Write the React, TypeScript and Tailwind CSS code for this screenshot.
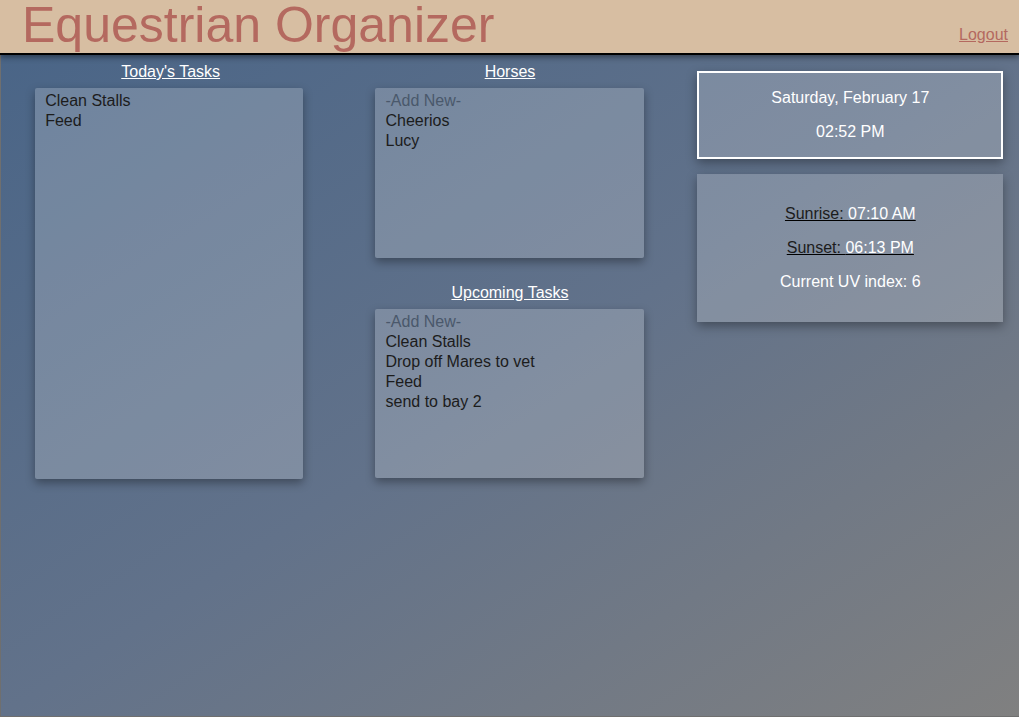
import React from "react";

const font = { fontFamily: '"Liberation Sans", Arial, sans-serif' };

function ListBox({ items, addNew, height }: { items: string[]; addNew?: boolean; height: string }) {
  return (
    <div className={`w-full ${height} rounded-[2px] bg-white/20 px-[10px] pt-[3px] text-[16px] leading-5 text-[#1c1c1c] shadow-[0_4px_10px_rgba(0,0,0,0.35)]`}>
      {addNew && <div className="text-[#4a586b]">-Add New-</div>}
      {items.map((it) => (
        <div key={it}>{it}</div>
      ))}
    </div>
  );
}

function Heading({ children }: { children: React.ReactNode }) {
  return <div className="text-center text-[16px] leading-5 text-white underline">{children}</div>;
}

export default function App() {
  return (
    <div className="flex h-[717px] w-[1019px] flex-col overflow-hidden" style={font}>
      {/* Header */}
      <header className="relative z-10 flex h-[55px] shrink-0 justify-between border-b-2 border-black bg-[#d7bea2] shadow-[0_2px_6px_rgba(0,0,0,0.45)]">
        <h1 className="pl-[22px] text-[50px] leading-[51px] text-[#b4695f]">Equestrian Organizer</h1>
        <a href="#" className="pr-[11px] pt-[25px] text-[16px] leading-5 text-[#b4695f] underline">
          Logout
        </a>
      </header>

      {/* Main */}
      <main className="grid flex-1 grid-cols-3 border-b border-l border-[#6f6f6f] bg-[linear-gradient(to_bottom_right,#4a6587_0%,#62728a_50%,#808080_100%)] pt-[7px]">
        <section className="flex flex-col items-center">
          <Heading>Today's Tasks</Heading>
          <div className="mr-[3px] mt-[6px] w-[268px]">
            <ListBox height="h-[391px]" items={["Clean Stalls", "Feed"]} />
          </div>
        </section>

        <section className="flex flex-col items-center">
          <Heading>Horses</Heading>
          <div className="mt-[6px] w-[269px]">
            <ListBox height="h-[170px]" addNew items={["Cheerios", "Lucy"]} />
          </div>
          <div className="mt-[25px]">
            <Heading>Upcoming Tasks</Heading>
          </div>
          <div className="mt-[6px] w-[269px]">
            <ListBox
              height="h-[169px]"
              addNew
              items={["Clean Stalls", "Drop off Mares to vet", "Feed", "send to bay 2"]}
            />
          </div>
        </section>

        <section className="flex flex-col items-center pt-[9px]">
          <div className="ml-[2px] flex w-[306px] flex-col items-center gap-4 border-2 border-white bg-white/20 py-4 text-[16px] leading-[18px] text-white shadow-[0_4px_10px_rgba(0,0,0,0.35)]">
            <div>Saturday, February 17</div>
            <div>02:52 PM</div>
          </div>
          <div className="ml-[2px] mt-[15px] flex w-[306px] flex-col items-center gap-4 bg-white/20 py-[31px] text-[16px] leading-[18px] text-white shadow-[0_4px_10px_rgba(0,0,0,0.35)]">
            <div className="underline decoration-black">
              <span className="text-[#1c1c1c]">Sunrise: </span>07:10 AM
            </div>
            <div className="underline decoration-black">
              <span className="text-[#1c1c1c]">Sunset: </span>06:13 PM
            </div>
            <div>Current UV index: 6</div>
          </div>
        </section>
      </main>
    </div>
  );
}
